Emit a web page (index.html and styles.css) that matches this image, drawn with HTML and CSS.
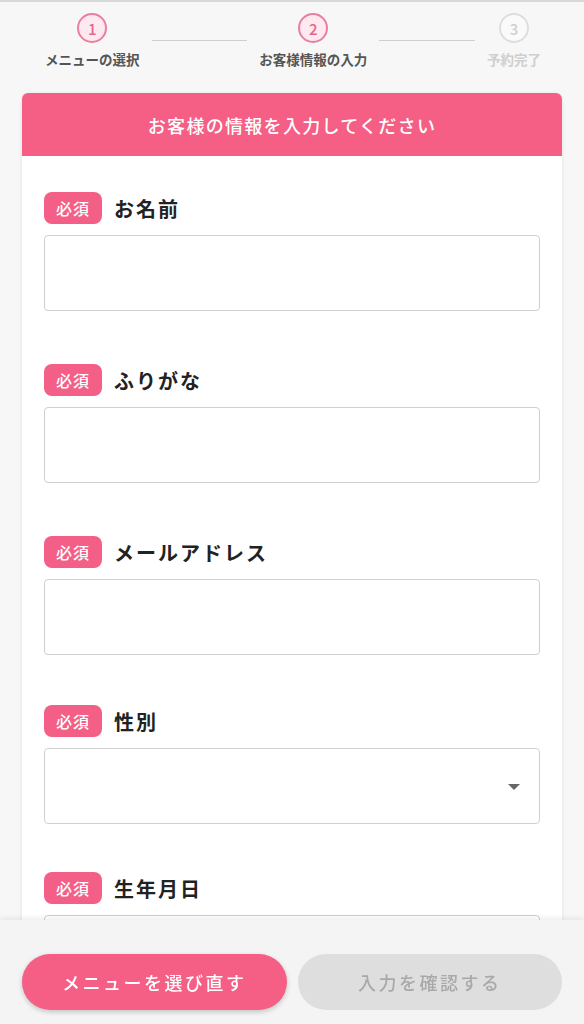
FILE: index.html
```html
<!DOCTYPE html>
<html lang="ja">
<head>
<meta charset="utf-8">
<link rel="stylesheet" href="styles.css">
</head>
<body>
<div class="topline"></div>
<div class="stepper">
  <div class="step active"><div class="circle">1</div><div class="slabel">メニューの選択</div></div>
  <div class="sline"></div>
  <div class="step active"><div class="circle">2</div><div class="slabel">お客様情報の入力</div></div>
  <div class="sline"></div>
  <div class="step todo"><div class="circle">3</div><div class="slabel">予約完了</div></div>
</div>
<div class="card">
  <div class="card-head">お客様の情報を入力してください</div>
  <div class="card-body">
    <div class="field">
      <div class="flabel"><span class="badge">必須</span><span class="ftext">お名前</span></div>
      <div class="input"></div>
    </div>
    <div class="field">
      <div class="flabel"><span class="badge">必須</span><span class="ftext">ふりがな</span></div>
      <div class="input"></div>
    </div>
    <div class="field f3">
      <div class="flabel"><span class="badge">必須</span><span class="ftext">メールアドレス</span></div>
      <div class="input"></div>
    </div>
    <div class="field f4">
      <div class="flabel"><span class="badge">必須</span><span class="ftext">性別</span></div>
      <div class="input select"><span class="arrow"></span></div>
    </div>
    <div class="field">
      <div class="flabel"><span class="badge">必須</span><span class="ftext">生年月日</span></div>
      <div class="input"></div>
    </div>
  </div>
</div>
<div class="bottombar">
  <button class="btn primary">メニューを選び直す</button>
  <button class="btn disabled">入力を確認する</button>
</div>
</body>
</html>
```
FILE: styles.css
```css
html, body {
  margin: 0;
  padding: 0;
  background: #f7f7f7;
  font-family: "Noto Sans CJK JP", "Noto Sans", sans-serif;
}
.topline {
  height: 2px;
  background: #d9d9d9;
}
.stepper {
  display: flex;
  align-items: flex-start;
  gap: 12px;
  padding: 11px 43px 0 45px;
  height: 79px;
  box-sizing: border-box;
}
.step {
  display: flex;
  flex-direction: column;
  align-items: center;
}
.circle {
  width: 30px;
  height: 30px;
  box-sizing: border-box;
  border-radius: 50%;
  border: 2.5px solid #e97f9e;
  background: #fde9ef;
  color: #e4668a;
  font-size: 15px;
  font-weight: 500;
  display: flex;
  align-items: center;
  justify-content: center;
  line-height: 1;
}
.step.todo .circle {
  border-color: #dedede;
  background: #fafafa;
  color: #cfcfcf;
}
.slabel {
  margin-top: 7px;
  font-size: 13.5px;
  font-weight: 700;
  color: #555;
  line-height: 18px;
  white-space: nowrap;
}
.step.todo .slabel {
  color: #cfcfcf;
}
.sline {
  flex: 1;
  height: 1px;
  background: #cfcfcf;
  margin-top: 27px;
}
.card {
  margin: 12px 22px 0;
  background: #fff;
  border-radius: 6px 6px 0 0;
  box-shadow: 0 1px 4px rgba(0,0,0,0.08);
  padding-bottom: 140px;
}
.card-head {
  height: 63px;
  background: #f55e85;
  border-radius: 6px 6px 0 0;
  color: #fff;
  font-size: 18px;
  letter-spacing: 1.3px;
  font-weight: 500;
  display: flex;
  align-items: center;
  justify-content: center;
}
.card-body {
  padding: 36px 22px 0;
}
.field {
  margin-bottom: 53px;
}
.field.f3 { margin-bottom: 50px; }
.field.f4 { margin-bottom: 48px; }
.flabel {
  display: flex;
  align-items: center;
  height: 32px;
}
.badge {
  width: 58px;
  height: 32px;
  border-radius: 8px;
  background: #f35f86;
  color: #fff;
  font-size: 16px;
  letter-spacing: 1px;
  font-weight: 500;
  display: flex;
  align-items: center;
  justify-content: center;
}
.ftext {
  margin-left: 12px;
  font-size: 20px;
  letter-spacing: 2px;
  font-weight: 700;
  color: #222;
}
.input {
  margin-top: 11px;
  height: 76px;
  box-sizing: border-box;
  border: 1px solid #cfcfcf;
  border-radius: 4px;
  background: #fff;
}
.select {
  display: flex;
  align-items: center;
  justify-content: flex-end;
  padding-right: 19px;
}
.arrow {
  width: 0;
  height: 0;
  border-left: 6px solid transparent;
  border-right: 6px solid transparent;
  border-top: 6px solid #666;
  margin-top: 2px;
}
.bottombar {
  position: fixed;
  left: 0;
  right: 0;
  bottom: 0;
  height: 104px;
  box-sizing: border-box;
  padding: 34px 22px 14px;
  background: #f4f4f4;
  box-shadow: 0 -2px 6px rgba(0,0,0,0.08);
  display: flex;
  gap: 11px;
}
.btn {
  flex: 1;
  height: 56px;
  border: none;
  border-radius: 28px;
  font-family: "Noto Sans CJK JP", "Noto Sans", sans-serif;
  font-size: 18px;
  letter-spacing: 2.5px;
  font-weight: 500;
}
.btn.primary {
  background: #f55e85;
  color: #fff;
  box-shadow: 0 2px 5px rgba(0,0,0,0.2);
}
.btn.disabled {
  background: #dedede;
  color: #a9a9a9;
}
```
